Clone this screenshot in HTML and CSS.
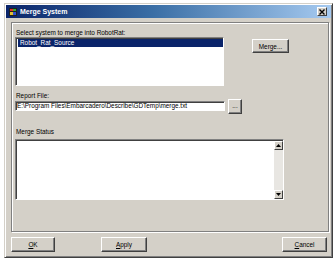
FILE: index.html
```html
<!DOCTYPE html>
<html lang="en">
<head>
    <meta charset="UTF-8">
    <title>Merge System</title>
    <link rel="stylesheet" href="styles.css">
</head>
<body>
<div class="window">
    <div class="titleBar">
        <svg class="titleIcon" width="8" height="8" viewBox="0 0 8 8">
            <rect x="0" y="0" width="8" height="8" fill="#202020"/>
            <rect x="1" y="1" width="3" height="2" fill="#e03030"/>
            <rect x="4" y="1" width="3" height="2" fill="#30b030"/>
            <rect x="1" y="4" width="3" height="3" fill="#e0c030"/>
            <rect x="4" y="4" width="3" height="3" fill="#3050d0"/>
        </svg>
        <span class="titleText">Merge System</span>
        <button class="closeButton">
            <svg width="6" height="6" viewBox="0 0 6 6"><path d="M0.5 0.5 L5.5 5.5 M5.5 0.5 L0.5 5.5" stroke="#000" stroke-width="1.4"/></svg>
        </button>
    </div>
    <div class="groupBox">
        <p class="label">Select system to merge into RobotRat:</p>
        <div class="systemRow">
            <div class="listBox">
                <div class="listItem selected">Robot_Rat_Source</div>
            </div>
            <button class="btn mergeButton">Merge...</button>
        </div>
        <p class="label reportLabel">Report File:</p>
        <div class="reportRow">
            <div class="textBox">E:\Program Files\Embarcadero\Describe\GDTemp\merge.txt</div>
            <button class="btn browseButton">...</button>
        </div>
        <p class="label statusLabel">Merge Status</p>
        <div class="statusBox">
            <div class="statusText"></div>
            <div class="scrollBar">
                <div class="scrollArrow"><svg width="5" height="3" viewBox="0 0 5 3"><path d="M0 3 L2.5 0 L5 3 Z" fill="#000"/></svg></div>
                <div class="scrollTrack"></div>
                <div class="scrollArrow"><svg width="5" height="3" viewBox="0 0 5 3"><path d="M0 0 L2.5 3 L5 0 Z" fill="#000"/></svg></div>
            </div>
        </div>
    </div>
    <div class="buttonRow">
        <button class="btn footButton okButton"><u>O</u>K</button>
        <button class="btn footButton applyButton"><u>A</u>pply</button>
        <button class="btn footButton cancelButton"><u>C</u>ancel</button>
    </div>
</div>
</body>
</html>
```

FILE: styles.css
```css
:root {
    --face: #d4d0c8;
    --shadow: #808080;
    --dark: #404040;
    --font-small: 6.4px;
}

* {
    box-sizing: border-box;
}

body {
    margin: 0;
    background: #ffffff;
    font-family: "Liberation Sans", Arial, sans-serif;
    font-size: var(--font-small);
    color: #000;
}

.window {
    margin: 3px 0 0 4px;
    width: 329px;
    height: 255px;
    background: var(--face);
    border: 1px solid;
    border-color: var(--face) var(--dark) var(--dark) var(--face);
    box-shadow: inset 1px 1px 0 #ffffff, inset -1px -1px 0 var(--shadow);
    padding: 1px;
    display: flex;
    flex-direction: column;
}

.titleBar {
    height: 13px;
    display: flex;
    align-items: center;
    padding: 0 2px 0 3px;
    background: linear-gradient(to right, #0a246a, #3a6ea5 45%, #a6caf0);
}

.titleIcon {
    margin-right: 3px;
}

.titleText {
    color: #ffffff;
    font-weight: bold;
    font-size: 7px;
    flex: 1;
}

.closeButton {
    width: 10px;
    height: 9px;
    padding: 0;
    margin-right: 2px;
    display: flex;
    align-items: center;
    justify-content: center;
    background: var(--face);
    border: 1px solid;
    border-color: #ffffff var(--dark) var(--dark) #ffffff;
}

.groupBox {
    margin: 4px 2px 0 5px;
    height: 210px;
    border: 1px solid var(--shadow);
    box-shadow: inset 1px 1px 0 #ffffff, 1px 1px 0 #ffffff;
    padding: 6px 3px 0 3px;
}

.label {
    margin: 0;
    height: 8px;
    line-height: 8px;
    padding-left: 1px;
}

.btn {
    font-family: "Liberation Sans", Arial, sans-serif;
    font-size: var(--font-small);
    color: #000;
    background: var(--face);
    padding: 0;
    border: 1px solid;
    border-color: #ffffff var(--dark) var(--dark) #ffffff;
    box-shadow: inset -1px -1px 0 var(--shadow);
}

.systemRow {
    display: flex;
    align-items: flex-start;
}

.listBox {
    width: 209px;
    height: 49px;
    background: #ffffff;
    border: 1px solid;
    border-color: var(--shadow) #ffffff #ffffff var(--shadow);
    box-shadow: inset 1px 1px 0 var(--dark);
    padding: 1px 0 0 2px;
}

.listItem {
    height: 8px;
    line-height: 8px;
    padding-left: 2px;
}

.selected {
    background: #0a246a;
    color: #ffffff;
}

.mergeButton {
    margin: 2px 0 0 28px;
    width: 37px;
    height: 14px;
}

.reportLabel {
    margin-top: 6px;
}

.reportRow {
    display: flex;
    align-items: center;
    height: 10px;
    margin-top: 1px;
}

.textBox {
    width: 210px;
    height: 10px;
    line-height: 8px;
    padding-left: 1px;
    background: #ffffff;
    border: 1px solid;
    border-color: var(--shadow) #ffffff #ffffff var(--shadow);
    box-shadow: inset 1px 1px 0 var(--dark);
    white-space: nowrap;
    overflow: hidden;
}

.browseButton {
    margin-left: 3px;
    width: 14px;
    height: 15px;
    line-height: 10px;
}

.statusLabel {
    margin-top: 17px;
}

.statusBox {
    margin-top: 3px;
    width: 269px;
    height: 61px;
    display: flex;
    background: #ffffff;
    border: 1px solid;
    border-color: var(--shadow) #ffffff #ffffff var(--shadow);
    box-shadow: inset 1px 1px 0 var(--dark);
    padding: 1px 0 0 1px;
}

.statusText {
    flex: 1;
}

.scrollBar {
    width: 9px;
    display: flex;
    flex-direction: column;
}

.scrollArrow {
    height: 9px;
    display: flex;
    align-items: center;
    justify-content: center;
    background: var(--face);
    border: 1px solid;
    border-color: #ffffff var(--dark) var(--dark) #ffffff;
}

.scrollTrack {
    flex: 1;
    background: #e8e6e2;
}

.buttonRow {
    display: flex;
    margin-top: 5px;
    padding-left: 5px;
}

.footButton {
    height: 15px;
}

.okButton {
    width: 44px;
}

.applyButton {
    width: 46px;
    margin-left: 46px;
}

.cancelButton {
    width: 45px;
    margin-left: auto;
    margin-right: 4px;
}
```
